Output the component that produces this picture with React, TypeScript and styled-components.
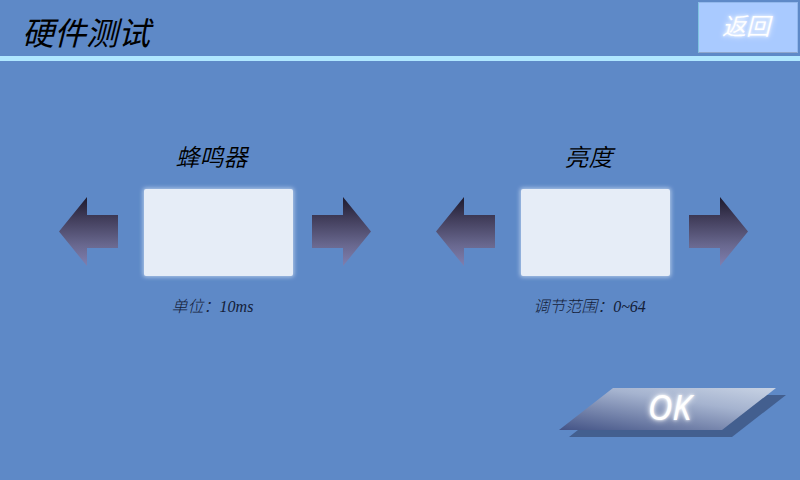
import React, { useId } from "react";
import styled, { createGlobalStyle } from "styled-components";

const GlobalStyle = createGlobalStyle`
  * { box-sizing: border-box; }
  body { margin: 0; background: #5e89c7; }
`;

const sans = `"Noto Sans", "Noto Sans CJK SC", sans-serif`;

const Page = styled.div`
  min-height: 100vh;
  display: flex;
  flex-direction: column;
  background: #5e89c7;
  color: #000;
  font-family: ${sans};
`;

const Header = styled.header`
  display: flex;
  justify-content: space-between;
  align-items: flex-start;
  min-height: 61px;
  padding: 2px 2px 0 22px;
  border-bottom: 5px solid #b0e7ff;
`;

const Title = styled.h1`
  margin: 6px 0 0;
  font-family: "Noto Sans CJK SC", sans-serif;
  font-size: 32px;
  line-height: 46px;
  font-weight: 400;
  font-style: italic;
`;

const BackButton = styled.button`
  width: 100px;
  height: 51px;
  padding: 0 4px 6px 0;
  border: 1px solid #93b8ec;
  border-left-color: #7fc4e0;
  border-bottom-color: #8ea6cc;
  background: #a9caff;
  color: #fff;
  font-family: "Noto Sans CJK SC", sans-serif;
  font-size: 24px;
  line-height: 32px;
  font-weight: 350;
  font-style: italic;
  text-shadow: 0 0 3px #fff, 0 0 6px #fff;
`;

const Settings = styled.main`
  display: grid;
  grid-template-columns: 1fr 1fr;
  padding: 78px 20px 0 26px;
`;

const Setting = styled.section`
  display: flex;
  flex-direction: column;
  align-items: center;
`;

const Label = styled.label`
  padding-right: 6px;
  font-family: "Noto Sans CJK SC", sans-serif;
  font-size: 24px;
  line-height: 34px;
  font-weight: 350;
  font-style: italic;
`;

const Stepper = styled.div`
  display: flex;
  align-items: flex-start;
  margin-top: 16px;
`;

const ArrowButton = styled.button`
  margin: 8px 0 0;
  padding: 0;
  border: 0;
  background: none;

  svg { display: block; }
`;

const ValueInput = styled.input`
  width: 149px;
  height: 87px;
  margin: 0 19px 0 26px;
  padding: 0 12px;
  border: 0;
  border-radius: 2px;
  background: #e6edf7;
  box-shadow: 0 0 4px 1px #b5cbe9;
  font: italic 32px ${sans};
  text-align: center;
`;

const Note = styled.p`
  margin: 19px 0 0;
  padding-right: 4px;
  font-family: "Liberation Serif", "Noto Sans CJK SC", serif;
  font-size: 16px;
  line-height: 24px;
  font-weight: 300;
  font-style: italic;
  color: #142038;
`;

const Footer = styled.footer`
  display: flex;
  justify-content: flex-end;
  margin-top: auto;
  padding: 0 14px 43px 0;
`;

const OkButton = styled.button`
  display: grid;
  padding: 0;
  border: 0;
  background: none;
  color: #fff;

  > * { grid-area: 1 / 1; }
`;

const OkText = styled.span`
  padding-right: 6px;
  font-family: ${sans};
  font-size: 34px;
  line-height: 38px;
  font-style: italic;
  font-weight: 400;
  text-shadow: 0 0 3px #fff, 0 0 6px #fff;
  z-index: 1;
`;

function Arrow({ direction }: { direction: "left" | "right" }) {
  const id = useId();
  const points =
    direction === "left"
      ? "0,34.5 28,0 28,18 59,18 59,51 28,51 28,69"
      : "59,34.5 31,0 31,18 0,18 0,51 31,51 31,69";
  return (
    <svg width="59" height="69" viewBox="0 0 59 69" aria-hidden="true">
      <defs>
        <linearGradient id={id} x1="0" y1="0" x2="0" y2="69" gradientUnits="userSpaceOnUse">
          <stop offset="0" stopColor="#1d1a2e" />
          <stop offset="0.3" stopColor="#403c59" />
          <stop offset="0.7" stopColor="#69688f" />
          <stop offset="1" stopColor="#7f7fb0" />
        </linearGradient>
      </defs>
      <polygon points={points} fill={`url(#${id})`} />
    </svg>
  );
}

function OkShape() {
  const id = useId();
  return (
    <svg width="227" height="49" viewBox="0 0 227 49" aria-hidden="true">
      <defs>
        <linearGradient id={id} x1="0" y1="42" x2="11" y2="-30" gradientUnits="userSpaceOnUse">
          <stop offset="0" stopColor="#435386" />
          <stop offset="0.65" stopColor="#a5b3cf" />
          <stop offset="1" stopColor="#c6d1e3" />
        </linearGradient>
      </defs>
      <polygon points="10,49 64,7 227,7 173,49" fill="#435f8f" />
      <polygon points="0,42 54,0 217,0 163,42" fill={`url(#${id})`} />
    </svg>
  );
}

interface SettingControlProps {
  id: string;
  label: string;
  note: string;
}

function SettingControl({ id, label, note }: SettingControlProps) {
  return (
    <Setting>
      <Label htmlFor={id}>{label}</Label>
      <Stepper>
        <ArrowButton type="button" aria-label={`${label} -`}>
          <Arrow direction="left" />
        </ArrowButton>
        <ValueInput id={id} type="text" inputMode="numeric" />
        <ArrowButton type="button" aria-label={`${label} +`}>
          <Arrow direction="right" />
        </ArrowButton>
      </Stepper>
      <Note>{note}</Note>
    </Setting>
  );
}

export default function App() {
  return (
    <Page>
      <GlobalStyle />
      <Header>
        <Title>硬件测试</Title>
        <BackButton type="button">返回</BackButton>
      </Header>
      <Settings>
        <SettingControl id="buzzer" label="蜂鸣器" note="单位：10ms" />
        <SettingControl id="brightness" label="亮度" note="调节范围：0~64" />
      </Settings>
      <Footer>
        <OkButton type="button">
          <OkShape />
          <OkText>OK</OkText>
        </OkButton>
      </Footer>
    </Page>
  );
}
